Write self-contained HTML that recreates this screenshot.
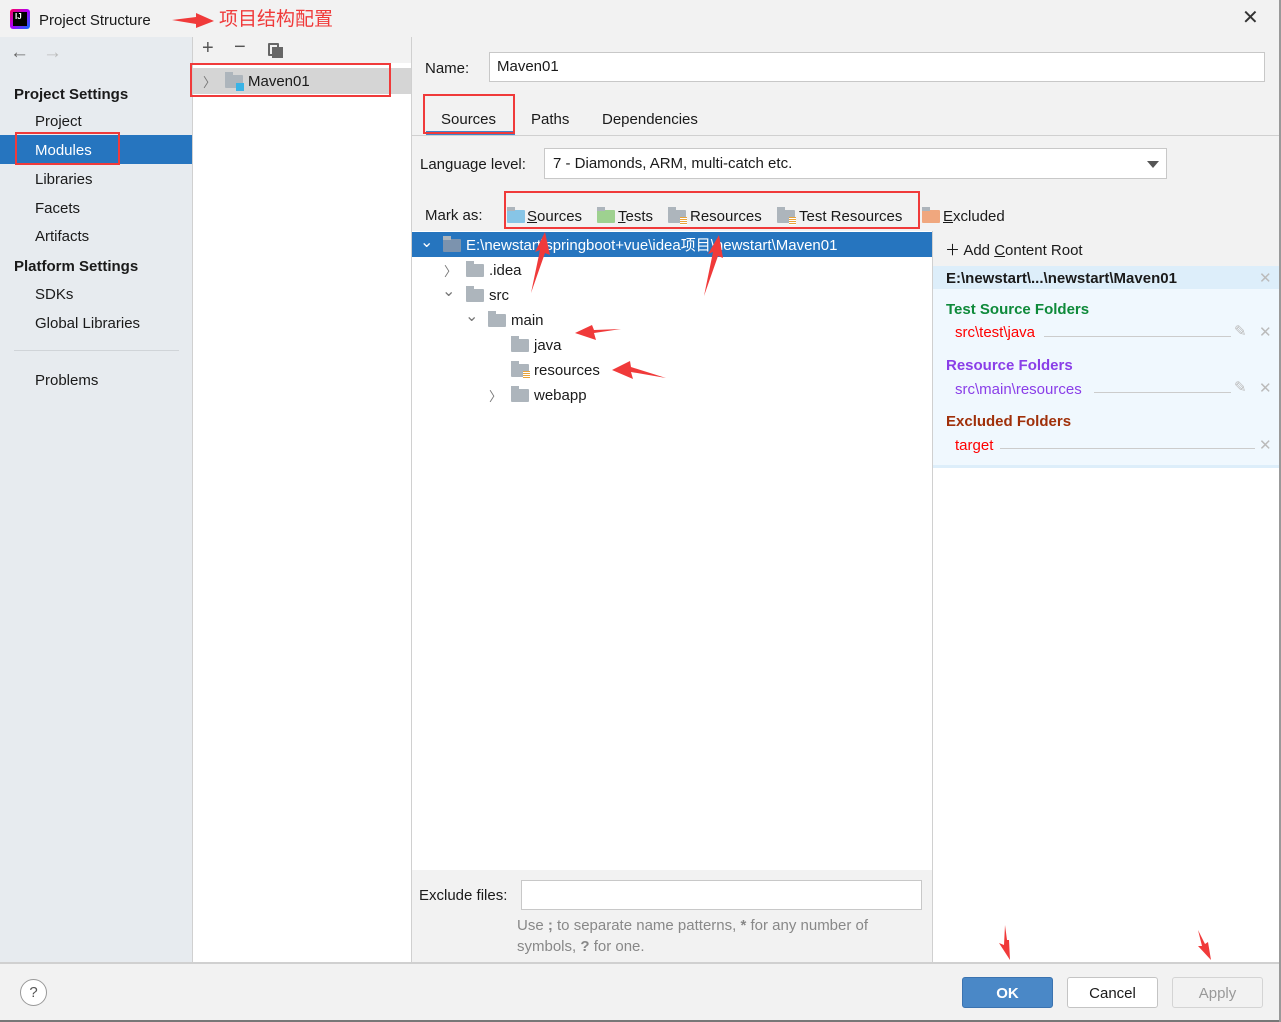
<!DOCTYPE html>
<html><head><meta charset="utf-8"><style>
*{margin:0;padding:0;box-sizing:border-box}
body{width:1281px;height:1022px;position:relative;overflow:hidden;background:#f2f2f2;font-family:"Liberation Sans","Noto Sans CJK SC",sans-serif;font-size:15px;color:#1a1a1a;line-height:21px}
.a{position:absolute;white-space:nowrap}
.fold{position:absolute;width:18px;height:13px;background:#adb5bc;border-radius:1px}
.fold:before{content:"";position:absolute;left:0;top:-3px;width:8px;height:4px;background:#adb5bc}
.st{position:absolute;width:7px;height:8px;background:repeating-linear-gradient(#e8a33a 0 1px,#fff 1px 2px)}
.rb{position:absolute;border:2px solid #f03a3a}
.chev{position:absolute;font-size:13px;color:#777}
</style></head><body>
<div class="a" style="left:0;top:0;width:1281px;height:37px;background:#f2f2f2"></div>
<div class="a" style="left:10px;top:9px;width:20px;height:20px;background:linear-gradient(135deg,#f05,#a0f,#07f);border-radius:3px"></div>
<div class="a" style="left:13px;top:12px;width:14px;height:14px;background:#000;color:#fff;font-size:8px;font-weight:bold;line-height:9px;padding-left:2px">IJ</div>
<div class="a" style="left:39px;top:10px">Project Structure</div>
<div class="a" style="left:219px;top:9px;color:#f03a3a;font-size:19px">项目结构配置</div>
<div class="a" style="left:1242px;top:8px;font-size:20px;color:#333">✕</div>
<div class="a" style="left:0;top:37px;width:192px;height:926px;background:#e7ebef"></div>
<div class="a" style="left:10px;top:42px;font-size:19px;color:#666">←</div>
<div class="a" style="left:43px;top:42px;font-size:19px;color:#bbb">→</div>
<div class="a" style="left:14px;top:84px;font-weight:bold">Project Settings</div>
<div class="a" style="left:35px;top:111px">Project</div>
<div class="a" style="left:0;top:135px;width:192px;height:29px;background:#2675bf"></div>
<div class="a" style="left:35px;top:140px;color:#fff">Modules</div>
<div class="rb" style="left:15px;top:132px;width:105px;height:33px"></div>
<div class="a" style="left:35px;top:169px">Libraries</div>
<div class="a" style="left:35px;top:198px">Facets</div>
<div class="a" style="left:35px;top:226px">Artifacts</div>
<div class="a" style="left:14px;top:256px;font-weight:bold">Platform Settings</div>
<div class="a" style="left:35px;top:284px">SDKs</div>
<div class="a" style="left:35px;top:313px">Global Libraries</div>
<div class="a" style="left:14px;top:350px;width:165px;height:1px;background:#d0d4d8"></div>
<div class="a" style="left:35px;top:370px">Problems</div>
<div class="a" style="left:192px;top:37px;width:1px;height:926px;background:#d0d0d0"></div>
<div class="a" style="left:193px;top:63px;width:218px;height:900px;background:#fff"></div>
<div class="a" style="left:202px;top:38px;font-size:20px;color:#555">+</div>
<div class="a" style="left:234px;top:37px;font-size:20px;color:#555">−</div>
<div class="a" style="left:268px;top:43px;width:11px;height:13px;border:2px solid #666;border-radius:1px"></div>
<div class="a" style="left:272px;top:47px;width:11px;height:11px;background:#666"></div>
<div class="a" style="left:193px;top:68px;width:218px;height:26px;background:#d5d5d5"></div>
<div class="chev" style="left:203px;top:72px">〉</div>
<div class="fold" style="left:225px;top:75px"></div>
<div class="a" style="left:236px;top:83px;width:8px;height:8px;background:#39b3e6"></div>
<div class="a" style="left:248px;top:71px">Maven01</div>
<div class="rb" style="left:190px;top:63px;width:201px;height:34px"></div>
<div class="a" style="left:411px;top:37px;width:1px;height:926px;background:#d0d0d0"></div>
<div class="a" style="left:425px;top:58px">Name:</div>
<div class="a" style="left:489px;top:52px;width:776px;height:30px;background:#fff;border:1px solid #c8c8c8;padding:3px 7px">Maven01</div>
<div class="a" style="left:441px;top:109px">Sources</div>
<div class="a" style="left:426px;top:131px;width:89px;height:4px;background:#4083c9"></div>
<div class="rb" style="left:423px;top:94px;width:92px;height:40px"></div>
<div class="a" style="left:531px;top:109px">Paths</div>
<div class="a" style="left:602px;top:109px">Dependencies</div>
<div class="a" style="left:412px;top:135px;width:869px;height:1px;background:#d0d0d0"></div>
<div class="a" style="left:420px;top:154px">Language level:</div>
<div class="a" style="left:544px;top:148px;width:623px;height:31px;background:#fff;border:1px solid #c8c8c8;padding:4px 8px">7 - Diamonds, ARM, multi-catch etc.</div>
<div class="a" style="left:1147px;top:161px;border-left:6px solid transparent;border-right:6px solid transparent;border-top:7px solid #555"></div>
<div class="a" style="left:425px;top:205px">Mark as:</div>
<div class="fold" style="left:507px;top:210px;background:#87c5e6"></div>
<div class="a" style="left:527px;top:206px"><u>S</u>ources</div>
<div class="fold" style="left:597px;top:210px;background:#9ed190"></div>
<div class="a" style="left:618px;top:206px"><u>T</u>ests</div>
<div class="fold" style="left:668px;top:210px"></div><div class="st" style="left:680px;top:217px"></div>
<div class="a" style="left:690px;top:206px">Resources</div>
<div class="fold" style="left:777px;top:210px"></div><div class="st" style="left:789px;top:217px"></div>
<div class="a" style="left:799px;top:206px">Test Resources</div>
<div class="rb" style="left:504px;top:191px;width:416px;height:38px"></div>
<div class="fold" style="left:922px;top:210px;background:#f0a77e"></div>
<div class="a" style="left:943px;top:206px"><u>E</u>xcluded</div>
<div class="a" style="left:412px;top:231px;width:520px;height:639px;background:#fff"></div>
<div class="a" style="left:412px;top:232px;width:520px;height:25px;background:#2675bf"></div>
<div class="a" style="left:420px;top:232px;color:#fff;font-size:16px">⌄</div>
<div class="fold" style="left:443px;top:239px;background:#7c93ae"></div>
<div class="a" style="left:466px;top:235px;color:#fff">E:\newstart\springboot+vue\idea项目\newstart\Maven01</div>
<div class="chev" style="left:444px;top:261px">〉</div>
<div class="fold" style="left:466px;top:264px"></div><div class="a" style="left:489px;top:260px">.idea</div>
<div class="chev" style="left:442px;top:281px;font-size:16px">⌄</div>
<div class="fold" style="left:466px;top:289px"></div><div class="a" style="left:489px;top:285px">src</div>
<div class="chev" style="left:465px;top:306px;font-size:16px">⌄</div>
<div class="fold" style="left:488px;top:314px"></div><div class="a" style="left:511px;top:310px">main</div>
<div class="fold" style="left:511px;top:339px"></div><div class="a" style="left:534px;top:335px">java</div>
<div class="fold" style="left:511px;top:364px"></div><div class="st" style="left:523px;top:371px"></div><div class="a" style="left:534px;top:360px">resources</div>
<div class="chev" style="left:489px;top:386px">〉</div>
<div class="fold" style="left:511px;top:389px"></div><div class="a" style="left:534px;top:385px">webapp</div>
<div class="a" style="left:419px;top:885px">Exclude files:</div>
<div class="a" style="left:521px;top:880px;width:401px;height:30px;background:#fff;border:1px solid #c8c8c8"></div>
<div class="a" style="left:517px;top:915px;color:#888;line-height:21px;white-space:normal;width:400px">Use <b>;</b> to separate name patterns, <b>*</b> for any number of symbols, <b>?</b> for one.</div>
<div class="a" style="left:932px;top:231px;width:1px;height:732px;background:#d0d0d0"></div>
<div class="a" style="left:933px;top:266px;width:348px;height:697px;background:#fff"></div>
<div class="a" style="left:933px;top:266px;width:348px;height:202px;background:#f0f8fe;border-bottom:3px solid #ddeefa"></div>
<div class="a" style="left:933px;top:266px;width:348px;height:23px;background:#ddeefa"></div>
<div class="a" style="left:945px;top:240px">＋ Add <u>C</u>ontent Root</div>
<div class="a" style="left:946px;top:268px;font-weight:bold">E:\newstart\...\newstart\Maven01</div>
<div class="a" style="left:1259px;top:268px;color:#bbb">✕</div>
<div class="a" style="left:946px;top:299px;font-weight:bold;color:#0e8a3a">Test Source Folders</div>
<div class="a" style="left:955px;top:322px;color:#f00">src\test\java</div>
<div class="a" style="left:1044px;top:336px;width:187px;height:1px;background:#ccc"></div>
<div class="a" style="left:1234px;top:321px;color:#bbb">✎</div><div class="a" style="left:1259px;top:322px;color:#bbb">✕</div>
<div class="a" style="left:946px;top:355px;font-weight:bold;color:#8a3ee8">Resource Folders</div>
<div class="a" style="left:955px;top:379px;color:#8a3ee8">src\main\resources</div>
<div class="a" style="left:1094px;top:392px;width:137px;height:1px;background:#ccc"></div>
<div class="a" style="left:1234px;top:377px;color:#bbb">✎</div><div class="a" style="left:1259px;top:378px;color:#bbb">✕</div>
<div class="a" style="left:946px;top:411px;font-weight:bold;color:#a0300a">Excluded Folders</div>
<div class="a" style="left:955px;top:435px;color:#f00">target</div>
<div class="a" style="left:1000px;top:448px;width:255px;height:1px;background:#ccc"></div>
<div class="a" style="left:1259px;top:435px;color:#bbb">✕</div>
<div class="a" style="left:0;top:962px;width:1281px;height:2px;background:#d0d0d0"></div>
<div class="a" style="left:20px;top:979px;width:27px;height:27px;border:1px solid #999;border-radius:50%;text-align:center;line-height:25px;color:#555;background:#fff">?</div>
<div class="a" style="left:962px;top:977px;width:91px;height:31px;background:#4a88c7;border:1px solid #3b73b0;border-radius:3px;color:#fff;font-weight:bold;text-align:center;line-height:31px">OK</div>
<div class="a" style="left:1067px;top:977px;width:91px;height:31px;background:#fff;border:1px solid #c4c4c4;border-radius:3px;text-align:center;line-height:31px">Cancel</div>
<div class="a" style="left:1172px;top:977px;width:91px;height:31px;background:#f2f2f2;border:1px solid #d4d4d4;border-radius:3px;text-align:center;line-height:31px;color:#999">Apply</div>
<div class="a" style="left:0;top:1020px;width:1281px;height:2px;background:#777"></div>
<div class="a" style="left:1279px;top:0;width:2px;height:1022px;background:#999"></div>
<svg class="a" style="left:0;top:0" width="1281" height="1022">
<g fill="#f03a3a">
<polygon points="172,20 196,17 196,13 214,21 196,28 196,24"/>
<polygon points="531,293 540,250 535,252 545,232 550,255 545,253"/>
<polygon points="704,296 713,252 708,254 719,235 723,258 718,256"/>
<polygon points="621,329 594,333 596,340 575,333 592,325 594,330"/>
<polygon points="666,378 631,372 633,379 612,370 630,361 631,367"/>
<polygon points="1005,925 1004,945 999,943 1010,960 1009,940 1007,940"/>
<polygon points="1198,930 1202,946 1198,946 1211,960 1208,942 1205,944"/>
</g></svg>
</body></html>
